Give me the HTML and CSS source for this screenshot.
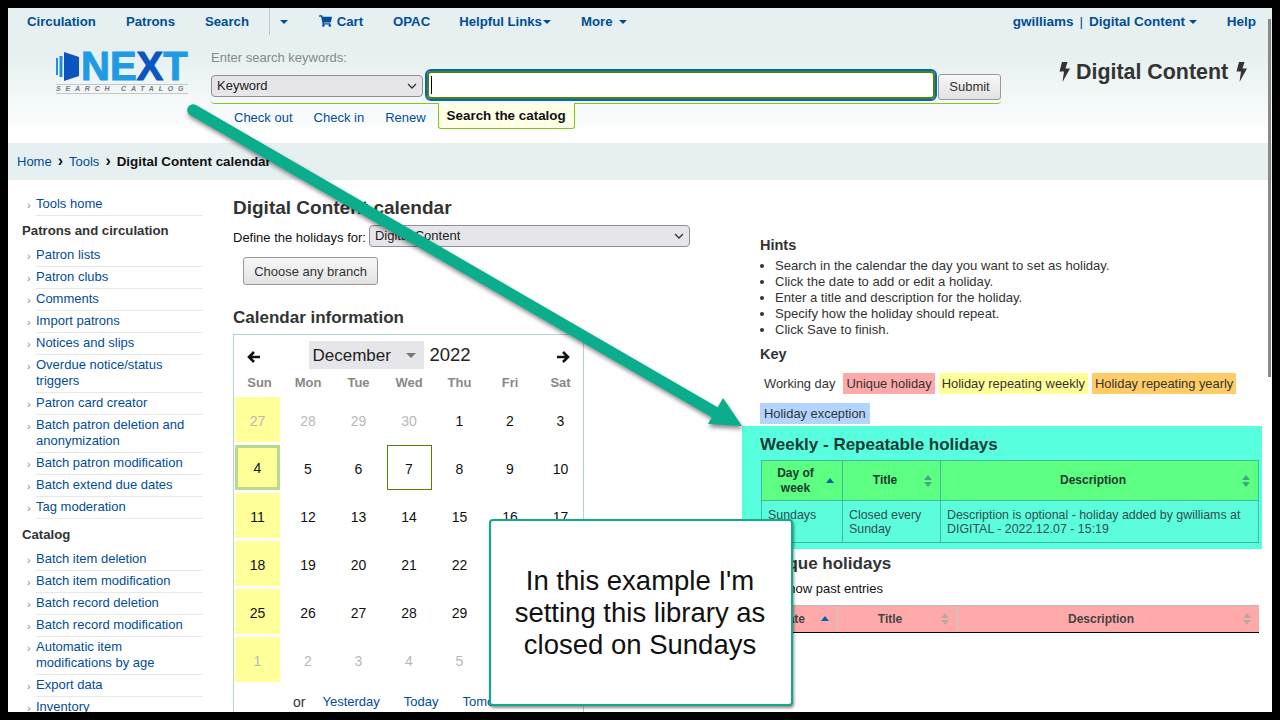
FILE: index.html
```html
<!DOCTYPE html>
<html lang="en">
<head>
    <meta charset="UTF-8">
    <title>Digital Content calendar</title>
    <link rel="stylesheet" href="styles.css">
</head>
<body>
<div class="frame">
    <header class="header">
        <nav class="topnav">
            <a class="nav-link" href="#">Circulation</a>
            <a class="nav-link" href="#">Patrons</a>
            <a class="nav-link" href="#">Search</a>
            <span class="nav-sep"></span>
            <a class="nav-link nav-split" href="#"><span class="caret"></span></a>
            <a class="nav-link" href="#">
                <svg class="cart" viewBox="0 0 576 512"><path d="M528.12 301.319l47.273-208C578.806 78.301 567.391 64 551.99 64H159.208l-9.166-44.81C147.758 8.021 137.93 0 126.529 0H24C10.745 0 0 10.745 0 24v16c0 13.255 10.745 24 24 24h69.883l70.248 343.435C147.325 417.1 136 435.222 136 456c0 30.928 25.072 56 56 56s56-25.072 56-56c0-15.674-6.447-29.835-16.824-40h209.647C430.447 426.165 424 440.326 424 456c0 30.928 25.072 56 56 56s56-25.072 56-56c0-22.172-12.888-41.332-31.579-50.405l5.517-24.276c3.413-15.018-8.002-29.319-23.403-29.319H218.117l-6.545-32h293.145c11.206 0 20.92-7.754 23.403-18.681z"/></svg>
                Cart
            </a>
            <a class="nav-link nav-opac" href="#">OPAC</a>
            <a class="nav-link nav-tight" href="#">Helpful Links<span class="caret"></span></a>
            <a class="nav-link nav-more" href="#">More <span class="caret"></span></a>
            <div class="nav-right">
                <a class="nav-user" href="#">gwilliams</a>
                <span class="nav-bar">|</span>
                <a class="nav-user" href="#">Digital Content <span class="caret"></span></a>
                <a class="nav-help" href="#">Help</a>
            </div>
        </nav>
        <div class="searchrow">
            <div class="logo">
                <div class="logo-top">
                    <svg class="door" viewBox="0 0 23 29">
                        <rect x="0" y="6" width="2" height="17" fill="#1f8fdc"/>
                        <rect x="3.5" y="4" width="3" height="21" fill="#1f8fdc"/>
                        <path d="M8 0 L23 5 V24 L8 29 Z" fill="#0b55c0"/>
                    </svg>
                    <span class="logo-word">NE<span class="logo-x">X</span>T</span>
                </div>
                <div class="logo-sub">SEARCH CATALOG</div>
            </div>
            <div class="searchbox">
                <div class="search-label">Enter search keywords:</div>
                <div class="search-fields">
                    <select class="search-select"><option>Keyword</option></select>
                    <div class="search-input"><span class="cursor"></span></div>
                    <button class="btn search-submit">Submit</button>
                </div>
                <div class="search-tabs">
                    <a href="#">Check out</a>
                    <a href="#">Check in</a>
                    <a href="#">Renew</a>
                    <span class="tab-active">Search the catalog</span>
                </div>
            </div>
            <div class="libname">
                <svg class="bolt" viewBox="0 0 11 20"><polygon points="3,0 8.5,0 6.5,6.5 11,6.5 3.5,20 5,9.5 0.5,9.5"/></svg>
                Digital Content
                <svg class="bolt bolt-end" viewBox="0 0 11 20"><polygon points="3,0 8.5,0 6.5,6.5 11,6.5 3.5,20 5,9.5 0.5,9.5"/></svg>
            </div>
        </div>
    </header>

    <div class="breadcrumb">
        <a href="#">Home</a><span class="crumb-sep">›</span><a href="#">Tools</a><span class="crumb-sep">›</span><b>Digital Content calendar</b>
    </div>

    <div class="content">
        <aside class="sidebar">
            <ul class="side-list">
                <li><a href="#">Tools home</a></li>
            </ul>
            <h5>Patrons and circulation</h5>
            <ul class="side-list">
                <li><a href="#">Patron lists</a></li>
                <li><a href="#">Patron clubs</a></li>
                <li><a href="#">Comments</a></li>
                <li><a href="#">Import patrons</a></li>
                <li><a href="#">Notices and slips</a></li>
                <li><a href="#">Overdue notice/status triggers</a></li>
                <li><a href="#">Patron card creator</a></li>
                <li><a href="#">Batch patron deletion and anonymization</a></li>
                <li><a href="#">Batch patron modification</a></li>
                <li><a href="#">Batch extend due dates</a></li>
                <li><a href="#">Tag moderation</a></li>
            </ul>
            <h5 class="side-catalog">Catalog</h5>
            <ul class="side-list">
                <li><a href="#">Batch item deletion</a></li>
                <li><a href="#">Batch item modification</a></li>
                <li><a href="#">Batch record deletion</a></li>
                <li><a href="#">Batch record modification</a></li>
                <li><a href="#">Automatic item modifications by age</a></li>
                <li><a href="#">Export data</a></li>
                <li><a href="#">Inventory</a></li>
            </ul>
        </aside>

        <main class="left-col">
            <h1>Digital Content calendar</h1>
            <div class="branch-row">
                <label class="branch-label">Define the holidays for:</label>
                <select class="branch-select"><option>Digital Content</option></select>
            </div>
            <button class="btn any-branch">Choose any branch</button>
            <h3 class="cal-title">Calendar information</h3>
            <div class="calendar">
                <div class="cal-head">
                    <svg class="cal-arrow" viewBox="0 0 14 14"><path d="M13 7H2M7 2L2 7l5 5"/></svg>
                    <div class="cal-month">December<span class="cal-caret"></span></div>
                    <span class="cal-year">2022</span>
                    <svg class="cal-arrow" viewBox="0 0 14 14"><path d="M1 7h11M7 2l5 5-5 5"/></svg>
                </div>
                <div class="cal-grid">
                    <span class="dow">Sun</span><span class="dow">Mon</span><span class="dow">Tue</span><span class="dow">Wed</span><span class="dow">Thu</span><span class="dow">Fri</span><span class="dow">Sat</span>
                    <span class="day holiday muted">27</span><span class="day muted">28</span><span class="day muted">29</span><span class="day muted">30</span><span class="day">1</span><span class="day">2</span><span class="day">3</span>
                    <span class="day holiday selected">4</span><span class="day">5</span><span class="day">6</span><span class="day today">7</span><span class="day">8</span><span class="day">9</span><span class="day">10</span>
                    <span class="day holiday">11</span><span class="day">12</span><span class="day">13</span><span class="day">14</span><span class="day">15</span><span class="day">16</span><span class="day">17</span>
                    <span class="day holiday">18</span><span class="day">19</span><span class="day">20</span><span class="day">21</span><span class="day">22</span><span class="day">23</span><span class="day">24</span>
                    <span class="day holiday">25</span><span class="day">26</span><span class="day">27</span><span class="day">28</span><span class="day">29</span><span class="day">30</span><span class="day">31</span>
                    <span class="day holiday muted">1</span><span class="day muted">2</span><span class="day muted">3</span><span class="day muted">4</span><span class="day muted">5</span><span class="day muted">6</span><span class="day muted">7</span>
                </div>
                <div class="cal-jump">
                    <span class="cal-or">or</span>
                    <a href="#">Yesterday</a>
                    <a href="#">Today</a>
                    <a href="#">Tomorrow</a>
                </div>
            </div>
        </main>

        <section class="right-col">
            <div class="hints">
                <h4>Hints</h4>
                <ul class="hint-list">
                    <li>Search in the calendar the day you want to set as holiday.</li>
                    <li>Click the date to add or edit a holiday.</li>
                    <li>Enter a title and description for the holiday.</li>
                    <li>Specify how the holiday should repeat.</li>
                    <li>Click Save to finish.</li>
                </ul>
                <h4 class="key-title">Key</h4>
                <div class="key-list">
                    <span class="key key-working">Working day</span>
                    <span class="key key-unique">Unique holiday</span>
                    <span class="key key-weekly">Holiday repeating weekly</span>
                    <span class="key key-yearly">Holiday repeating yearly</span>
                    <span class="key key-exception">Holiday exception</span>
                </div>
            </div>
            <div class="weekly">
                <h3>Weekly - Repeatable holidays</h3>
                <table class="holidays">
                    <colgroup><col class="w1"><col class="w2"><col></colgroup>
                    <thead>
                        <tr>
                            <th>Day of<br>week<span class="sort sort-up"></span></th>
                            <th>Title<span class="sort"></span></th>
                            <th>Description<span class="sort"></span></th>
                        </tr>
                    </thead>
                    <tbody>
                        <tr>
                            <td>Sundays</td>
                            <td>Closed every Sunday</td>
                            <td>Description is optional - holiday added by gwilliams at DIGITAL - 2022.12.07 - 15:19</td>
                        </tr>
                    </tbody>
                </table>
            </div>
            <div class="unique">
                <h3>Unique holidays</h3>
                <label class="past"><input type="checkbox"> Show past entries</label>
                <table class="holidays holidays-red">
                    <colgroup><col class="u1"><col class="u2"><col></colgroup>
                    <thead>
                        <tr>
                            <th>Date<span class="sort sort-up"></span></th>
                            <th>Title<span class="sort"></span></th>
                            <th>Description<span class="sort"></span></th>
                        </tr>
                    </thead>
                </table>
            </div>
        </section>
    </div>
    <div class="scrollthumb"></div>
</div>

<svg class="overlay" viewBox="0 0 1280 720">
    <path d="M193 110 L716 413" fill="none" stroke="#0aae8c" stroke-width="11.5" stroke-linecap="round"/>
    <polygon points="708,424 723,398 742,426" fill="#0aae8c"/>
</svg>
<div class="callout">In this example I'm setting this library as closed on Sundays</div>
</body>
</html>
```

FILE: styles.css
```css
* {
    box-sizing: border-box;
}

body {
    margin: 0;
    background-color: #000;
    font-family: "Liberation Sans", Arial, sans-serif;
    font-size: 13px;
    line-height: 16px;
    color: #333;
}

a {
    color: #004d99;
    text-decoration: none;
}

.frame {
    position: relative;
    width: 1264px;
    height: 704px;
    margin: 8px;
    background-color: #fff;
    overflow: hidden;
}

.scrollthumb {
    position: absolute;
    top: 11px;
    right: 1.5px;
    width: 2.5px;
    height: 358px;
    background-color: #8a8a8a;
}

/* header */
.header {
    height: 135px;
    background: linear-gradient(to bottom, #e6f0f0 0%, #e6f0f0 35%, #fff 95%);
}

.topnav {
    display: flex;
    align-items: center;
    height: 27px;
    padding-left: 19px;
    font-size: 13.2px;
    font-weight: bold;
}

.nav-link {
    margin-right: 30px;
    white-space: nowrap;
}

.nav-opac {
    margin-right: 29px;
}

.nav-tight {
    margin-right: 30px;
}

.nav-tight .caret {
    margin-left: 1px;
}

.nav-more .caret {
    margin-left: 3px;
}

.nav-sep {
    width: 1px;
    height: 27px;
    margin: 0 10px 0 -10px;
    background-color: #b9cdd3;
}

.nav-split {
    margin-right: 31px;
}

.caret {
    display: inline-block;
    vertical-align: middle;
    width: 0;
    height: 0;
    border-top: 4px solid #004d99;
    border-left: 4px solid transparent;
    border-right: 4px solid transparent;
}

.cart {
    width: 13px;
    height: 12px;
    margin-right: 1px;
    fill: #004d99;
    vertical-align: -1px;
}

.nav-right {
    display: flex;
    align-items: center;
    margin-left: auto;
    padding-right: 16px;
    font-size: 13.5px;
}

.nav-bar {
    margin: 0 6px;
    font-weight: normal;
    color: #004d99;
}

.nav-help {
    margin-left: 30px;
}

.searchrow {
    display: flex;
    align-items: flex-start;
}

.logo {
    width: 132px;
    margin: 17px 0 0 48px;
}

.logo-top {
    display: flex;
    align-items: center;
    height: 29px;
}

.door {
    width: 23px;
    height: 29px;
    flex: none;
}

.logo-word {
    margin-left: 2px;
    font-size: 40px;
    line-height: 29px;
    font-weight: bold;
    color: #1f9be5;
    -webkit-text-stroke: 1px #1f9be5;
}

.logo-x {
    color: #0b55c0;
    -webkit-text-stroke: 1px #0b55c0;
}

.logo-sub {
    height: 10px;
    margin-top: 3px;
    border-top: 1px solid #c4c8cc;
    border-bottom: 1px solid #c4c8cc;
    font-size: 7px;
    line-height: 8px;
    font-style: italic;
    font-weight: bold;
    letter-spacing: 4.8px;
    color: #777;
    white-space: nowrap;
}

.searchbox {
    width: 790px;
    margin: 15px 0 0 23px;
}

.search-label {
    height: 16px;
    margin-bottom: 4px;
    color: #888;
}

.search-fields {
    display: flex;
    align-items: center;
    height: 34px;
    border-bottom: 1px solid #8cc220;
    border-radius: 0 0 4px 4px;
    padding-bottom: 4px;
}

.search-select,
.branch-select {
    appearance: none;
    flex: none;
    height: 22px;
    padding: 0 4px 0 5px;
    background: #e6e6ea url("data:image/svg+xml,%3Csvg xmlns='http://www.w3.org/2000/svg' width='10' height='6'%3E%3Cpath d='M1 1l4 4 4-4' fill='none' stroke='%23333' stroke-width='1.3'/%3E%3C/svg%3E") no-repeat right 5px center;
    border: 1px solid #8f8f9d;
    border-radius: 4px;
    font-family: inherit;
    font-size: 13px;
    color: #222;
}

.search-select {
    width: 212px;
    margin-top: 2px;
}

.search-input {
    display: flex;
    align-items: center;
    width: 508px;
    height: 28px;
    margin-left: 4px;
    padding-left: 2px;
    background-color: #fff;
    border: 2px solid #538200;
    border-radius: 4px;
    outline: 2px solid #0066cc;
    outline-offset: 0;
}

.cursor {
    width: 1px;
    height: 18px;
    background-color: #000;
}

.btn {
    background: linear-gradient(to bottom, #f7f7f7, #e2e2e2);
    border: 1px solid #999;
    border-radius: 3px;
    font-family: inherit;
    font-size: 13px;
    color: #333;
}

.search-submit {
    width: 63px;
    height: 26px;
    margin-left: 3px;
    margin-top: 4px;
}

.search-tabs {
    display: flex;
    align-items: flex-start;
    padding-left: 23px;
}

.search-tabs a {
    margin-top: 6px;
    margin-right: 21px;
}

.tab-active {
    height: 26px;
    margin-left: -9px;
    margin-top: -1px;
    padding: 5px 8px;
    background-color: #ffffe8;
    border: 1px solid #8cc220;
    border-top: none;
    border-radius: 0 0 3px 3px;
    font-size: 13.4px;
    font-weight: bold;
    color: #111;
}

.libname {
    display: flex;
    align-items: center;
    gap: 6px;
    margin: 25px 0 0 58px;
    font-size: 21.4px;
    line-height: 24px;
    font-weight: bold;
    color: #333;
    white-space: nowrap;
}

.bolt {
    width: 11px;
    height: 20px;
    fill: #333;
}

.bolt-end {
    margin-left: 2px;
}

.breadcrumb {
    height: 37px;
    padding: 10px 0 0 9px;
    background-color: #e6f0f0;
    color: #111;
}

.breadcrumb b {
    font-size: 13.4px;
}

.crumb-sep {
    margin: 0 6px;
    font-weight: bold;
    font-size: 16px;
    line-height: 16px;
}

/* three columns */
.content {
    display: flex;
    align-items: flex-start;
}

.sidebar {
    flex: none;
    width: 225px;
    padding: 13.5px 30px 0 14px;
}

.sidebar h5 {
    margin: 7px 0 6px;
    font-size: 13.2px;
    line-height: 16px;
    font-weight: bold;
    color: #333;
}

.sidebar .side-catalog {
    margin-top: 8px;
}

.side-list {
    margin: 0;
    padding: 0;
    list-style: none;
}

.side-list li {
    position: relative;
    margin-left: 14px;
    padding: 2px 3px 3px 0;
    border-bottom: 1px solid #e8e8e8;
}

.side-list li::before {
    content: "›";
    position: absolute;
    left: -9px;
    top: 3px;
    color: #888;
    font-size: 11px;
}

.left-col {
    flex: none;
    width: 351px;
    padding-top: 17px;
}

h1 {
    margin: 0;
    font-size: 19px;
    line-height: 22px;
    color: #333;
}

.branch-row {
    display: flex;
    align-items: center;
    gap: 3px;
    height: 22px;
    margin-top: 6px;
    white-space: nowrap;
    color: #111;
}

.branch-label {
    margin-top: 3px;
}

.branch-select {
    width: 321px;
    padding-bottom: 2px;
}

.any-branch {
    display: block;
    width: 135px;
    height: 28px;
    margin: 10px 0 0 10px;
}

.cal-title {
    margin: 23px 0 6px;
    font-size: 17px;
    line-height: 20px;
    color: #333;
}

.calendar {
    width: 351px;
    height: 400px;
    padding: 6px 1px 0;
    border: 1px solid #b3d4d6;
}

.cal-head {
    display: flex;
    align-items: center;
    height: 28px;
}

.cal-arrow {
    width: 14px;
    height: 14px;
    margin-top: 3px;
    fill: none;
    stroke: #111;
    stroke-width: 2.6;
}

.cal-head .cal-arrow:first-child {
    margin-left: 11.5px;
    margin-right: 48px;
}

.cal-head .cal-arrow:last-child {
    margin-left: 85px;
}

.cal-month {
    display: flex;
    align-items: center;
    width: 115px;
    height: 28px;
    padding: 1px 0 0 4px;
    background-color: #e6e6ea;
    font-size: 17px;
    color: #222;
}

.cal-caret {
    margin-left: 15px;
    border-top: 5px solid #777;
    border-left: 5px solid transparent;
    border-right: 5px solid transparent;
}

.cal-year {
    margin-left: 6px;
    font-size: 18.5px;
    color: #222;
}

.cal-grid {
    display: grid;
    grid-template-columns: repeat(7, 45px);
    grid-template-rows: 22px repeat(6, 45px);
    column-gap: 5.5px;
    row-gap: 3px;
    margin-top: 3px;
}

.dow {
    padding-top: 3px;
    text-align: center;
    font-weight: bold;
    color: #888;
}

.dow:first-child {
    padding-left: 4px;
}

.day {
    display: flex;
    align-items: center;
    justify-content: center;
    padding-top: 3px;
    font-size: 14px;
    color: #111;
}

.day.muted {
    color: #b8b8b8;
}

.holiday {
    background-color: #ffff99;
}

.selected {
    border: 3px solid #b9d98c;
    padding-top: 1px;
}

.today {
    border: 1px solid #538200;
}

.cal-jump {
    display: flex;
    align-items: center;
    height: 20px;
    margin-top: 10px;
    padding-left: 58px;
    white-space: nowrap;
}

.cal-jump a {
    margin-right: 24px;
}

.cal-or {
    margin-right: 17px;
    font-size: 14px;
    color: #333;
}

.right-col {
    flex: none;
    width: 520px;
    margin-left: 158px;
    padding-top: 57px;
}

.hints {
    padding-left: 18px;
}

h4 {
    margin: 0;
    font-size: 14.5px;
    line-height: 17px;
    color: #333;
}

.hint-list {
    margin: 4px 0 0;
    padding-left: 15px;
    font-size: 13.1px;
}

.key-title {
    margin-top: 8px;
}

.key-list {
    display: flex;
    flex-wrap: wrap;
    gap: 9px 4px;
    margin-top: 10px;
    font-size: 12.9px;
}

.key {
    height: 21px;
    padding: 3px 3px 2px;
    color: #333;
}

.key-working {
    margin-right: 1px;
    padding-left: 4px;
}

.key-unique {
    background-color: #ffaaaa;
}

.key-weekly {
    background-color: #ffff99;
}

.key-yearly {
    background-color: #ffcc66;
}

.key-exception {
    padding: 3px 4px 2px;
    background-color: #b3d4ff;
}

.weekly {
    height: 123px;
    margin-top: 2px;
    padding: 9px 3px 0 18px;
    background-color: #57ffdf;
}

.weekly h3,
.unique h3 {
    margin: 0 0 5px;
    font-size: 17px;
    line-height: 20px;
    color: #1c3b38;
}

.unique {
    padding: 5px 3px 0 18px;
}

.unique h3 {
    color: #333;
    margin-bottom: 7px;
}

.past {
    display: block;
    height: 16px;
    margin-bottom: 8px;
    color: #111;
}

.past input {
    margin: 0 3px 0 0;
    vertical-align: -2px;
}

.holidays {
    width: 498px;
    margin-left: 1px;
    border-collapse: collapse;
    table-layout: fixed;
    font-size: 12px;
}

.w1 {
    width: 81px;
}

.w2 {
    width: 98px;
}

.u1 {
    width: 76px;
}

.u2 {
    width: 120px;
}

.holidays th {
    position: relative;
    height: 40px;
    padding: 4px 19px 4px 6px;
    background-color: #5cff82;
    border: 1px solid #44b8a0;
    line-height: 15px;
    color: #1b3b33;
}

.holidays td {
    height: 42px;
    padding: 7px 6px 5px;
    background-color: #5cfddd;
    border: 1px solid #44b8a0;
    font-size: 12.4px;
    line-height: 14px;
    vertical-align: top;
    color: #2f4f4f;
}

.holidays-red th {
    height: 27px;
    padding-right: 21px;
    background-color: #ffaaaa;
    border: none;
    border-left: 1px solid #b8d4c8;
    border-bottom: 1px solid #000;
    border-top: 1px solid #bbb;
    color: #444;
}

/* sort arrows sit over the header cell */
.sort {
    position: absolute;
    top: 50%;
    right: 8px;
    width: 8px;
    height: 12px;
    margin-top: -6px;
}

.sort::before,
.sort::after {
    content: "";
    position: absolute;
    left: 0;
    border-left: 4px solid transparent;
    border-right: 4px solid transparent;
}

.sort::before {
    top: 0;
    border-bottom: 5px solid #44a58c;
}

.sort::after {
    bottom: 0;
    border-top: 5px solid #44a58c;
}

.sort-up::before {
    top: 3px;
    border-bottom-color: #0a5fa8;
}

.sort-up::after {
    display: none;
}

.holidays-red .sort::before {
    border-bottom-color: #b8a8a0;
}

.holidays-red .sort::after {
    border-top-color: #b8a8a0;
}

.holidays-red .sort-up::before {
    border-bottom-color: #0a5fa8;
}

/* annotation drawn over the screenshot */
.overlay {
    position: absolute;
    top: 0;
    left: 0;
    width: 1280px;
    height: 720px;
    filter: drop-shadow(1px 3px 2px rgba(0, 0, 0, 0.45));
    pointer-events: none;
}

.callout {
    position: absolute;
    left: 489px;
    top: 519px;
    display: flex;
    align-items: center;
    justify-content: center;
    width: 304px;
    height: 187px;
    padding: 0 22px 0 20px;
    background-color: #fff;
    border: 2px solid #0aae8c;
    border-radius: 4px;
    box-shadow: 1px 2px 3px rgba(0, 0, 0, 0.45);
    font-size: 27.5px;
    line-height: 32px;
    text-align: center;
    color: #111;
}
```
